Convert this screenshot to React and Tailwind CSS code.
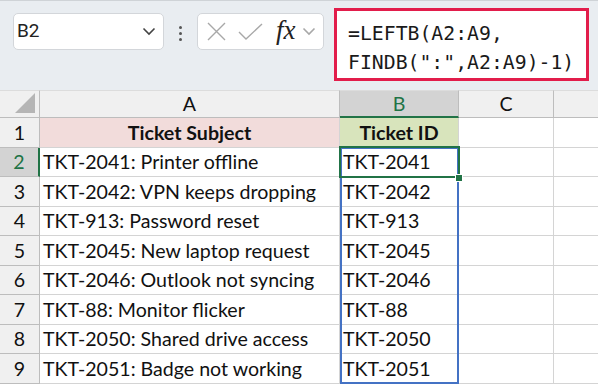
const rows = [
  ['TKT-2041: Printer offline', 'TKT-2041'],
  ['TKT-2042: VPN keeps dropping', 'TKT-2042'],
  ['TKT-913: Password reset', 'TKT-913'],
  ['TKT-2045: New laptop request', 'TKT-2045'],
  ['TKT-2046: Outlook not syncing', 'TKT-2046'],
  ['TKT-88: Monitor flicker', 'TKT-88'],
  ['TKT-2050: Shared drive access', 'TKT-2050'],
  ['TKT-2051: Badge not working', 'TKT-2051'],
];

function Chevron({ className }) {
  return (
    <svg width="14" height="9" viewBox="0 0 14 9" className={className}>
      <polyline points="1.5,1.5 7,7 12.5,1.5" fill="none" stroke="currentColor" strokeWidth="1.6" />
    </svg>
  );
}

function TopBar() {
  return (
    <div className="h-[90px] bg-[#e9edf1] border-t border-[#cfd3d7] flex items-start pl-[13px]">
      {/* name box */}
      <div className="mt-[12px] w-[151px] h-[37px] bg-white border border-[#d3d6da] rounded-[5px] flex items-center justify-between pl-[3px] pr-[7px]">
        <span className="text-[19px] text-[#222] font-['Roboto']">B2</span>
        <Chevron className="text-[#444]" />
      </div>
      {/* dots */}
      <div className="mt-[25px] w-[33px] flex flex-col items-center gap-[3px]">
        <div className="w-[3px] h-[3px] rounded-full bg-[#555]" />
        <div className="w-[3px] h-[3px] rounded-full bg-[#555]" />
        <div className="w-[3px] h-[3px] rounded-full bg-[#555]" />
      </div>
      {/* fx box */}
      <div className="mt-[12px] w-[127px] h-[37px] bg-white border border-[#d3d6da] rounded-[5px] flex items-center pl-[8px]">
        <svg width="21" height="21" viewBox="0 0 21 21">
          <path d="M2 2 L19 19 M19 2 L2 19" stroke="#a8a8a8" strokeWidth="1.4" fill="none" />
        </svg>
        <svg width="26" height="20" viewBox="0 0 26 20" className="ml-[11px]">
          <polyline points="1,10 8,17 24,2" stroke="#a8a8a8" strokeWidth="1.4" fill="none" />
        </svg>
        <span className="ml-[12px] text-[27px] leading-none italic text-[#222] font-['Liberation_Serif'] -mt-[3px]">fx</span>
        <Chevron className="ml-[6px] text-[#a8a8a8]" />
      </div>
      {/* formula */}
      <div className="ml-[10px] mt-[7px] w-[255px] h-[73px] bg-white border-[3px] border-[#e21d4b] pl-[11px] pt-[8px] font-['DejaVu_Sans_Mono'] text-[19.8px] leading-[29px] text-[#1a1a1a] whitespace-pre">
        <div>=LEFTB(A2:A9,</div>
        <div>FINDB(":",A2:A9)-1)</div>
      </div>
    </div>
  );
}

function Grid() {
  return (
    <div className="relative grid grid-cols-[40px_300px_119px_95px_1fr] font-['Lato'] text-[19.6px] text-[#111]">
      {/* column header row */}
      <div className="h-[28px] bg-[#f0f0f0] border-r border-b border-[#bdbdbd] border-t border-t-[#dcdcdc] relative">
        <svg width="20" height="20" viewBox="0 0 20 20" className="absolute right-[4px] bottom-[4px]">
          <polygon points="20,0 20,20 0,20" fill="#b5b5b5" />
        </svg>
      </div>
      <div className="h-[28px] bg-[#f0f0f0] border-r border-b border-[#bdbdbd] border-t border-t-[#dcdcdc] flex items-center justify-center">A</div>
      <div className="h-[28px] bg-[#d3d3d3] border-r border-b-2 border-r-[#bdbdbd] border-b-[#217346] border-t border-t-[#dcdcdc] flex items-center justify-center text-[#217346]">B</div>
      <div className="h-[28px] bg-[#f0f0f0] border-r border-b border-[#bdbdbd] border-t border-t-[#dcdcdc] flex items-center justify-center">C</div>
      <div className="h-[28px] bg-[#f0f0f0] border-b border-[#bdbdbd] border-t border-t-[#dcdcdc]" />

      {/* row 1 */}
      <div className="h-[29.5px] bg-[#f0f0f0] border-r border-b border-[#bdbdbd] flex items-center justify-center">1</div>
      <div className="h-[29.5px] bg-[#f2dcdb] border-r border-b border-[#d4d4d4] flex items-center justify-center font-bold">Ticket Subject</div>
      <div className="h-[29.5px] bg-[#d8e4bc] border-r border-b border-[#d4d4d4] flex items-center justify-center font-bold">Ticket ID</div>
      <div className="h-[29.5px] border-r border-b border-[#d4d4d4]" />
      <div className="h-[29.5px] border-b border-[#d4d4d4]" />

      {rows.map(([subject, id], i) => (
        <Row key={i} n={i + 2} subject={subject} id={id} active={i === 0} />
      ))}

      {/* spill range outline */}
      <div className="absolute left-[340px] top-[57px] w-[119px] h-[237px] border-2 border-[#4472c4] pointer-events-none" />
      {/* active cell */}
      <div className="absolute left-[339px] top-[56px] w-[121px] h-[32px] border-2 border-[#217346] pointer-events-none" />
      <div className="absolute left-[455px] top-[84px] w-[8px] h-[8px] bg-[#217346] border border-white pointer-events-none" />
    </div>
  );
}

function Row({ n, subject, id, active }) {
  return (
    <>
      <div
        className={
          active
            ? 'h-[29.5px] bg-[#d3d3d3] border-r-2 border-r-[#217346] border-b border-b-[#bdbdbd] flex items-center justify-center text-[#217346]'
            : 'h-[29.5px] bg-[#f0f0f0] border-r border-b border-[#bdbdbd] flex items-center justify-center'
        }
      >
        {n}
      </div>
      <div className="h-[29.5px] border-r border-b border-[#d4d4d4] flex items-center pl-[3px] whitespace-nowrap overflow-hidden">{subject}</div>
      <div className="h-[29.5px] border-r border-b border-[#d4d4d4] flex items-center pl-[3px]">{id}</div>
      <div className="h-[29.5px] border-r border-b border-[#d4d4d4]" />
      <div className="h-[29.5px] border-b border-[#d4d4d4]" />
    </>
  );
}

export default function App() {
  return (
    <div className="w-[598px] h-[388px] overflow-hidden bg-white">
      <TopBar />
      <Grid />
    </div>
  );
}
